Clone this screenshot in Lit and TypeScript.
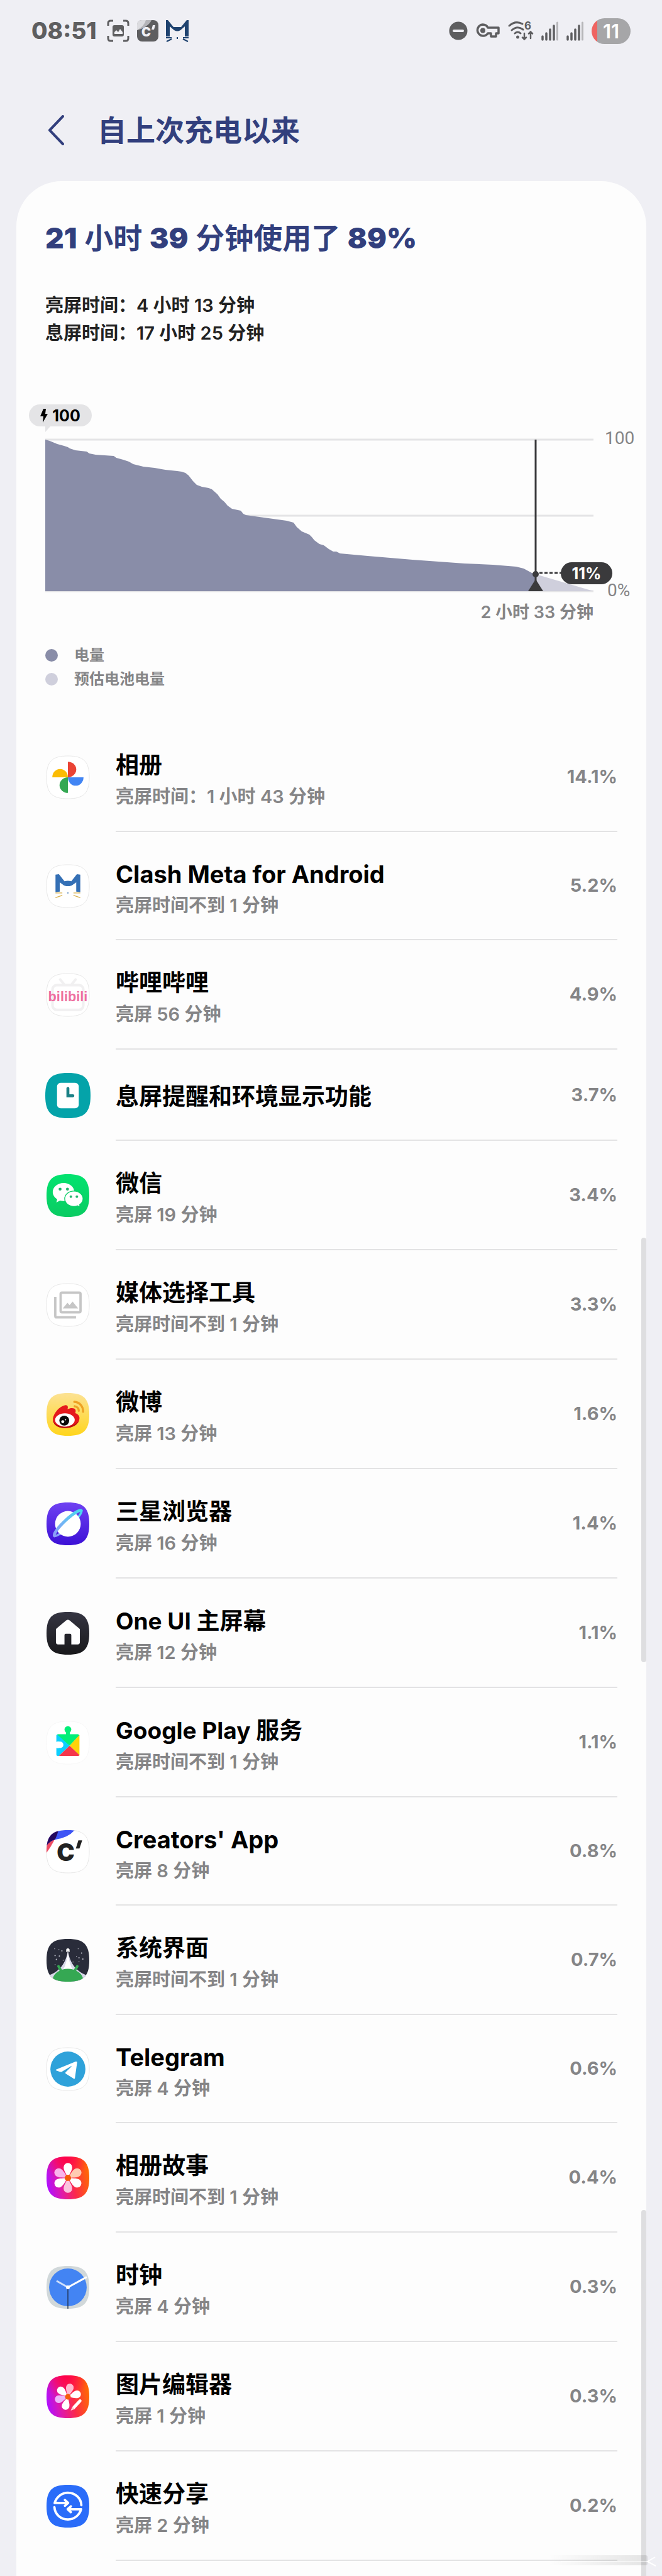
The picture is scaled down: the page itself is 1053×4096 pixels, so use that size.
import { LitElement, html, svg, css, nothing, TemplateResult } from "lit";
import { customElement, property } from "lit/decorators.js";
import { classMap } from "lit/directives/class-map.js";

interface AppUsage {
  name: string;
  detail?: string;
  share: string;
  icon: string;
  /** Latin-only names sit in a slightly shorter row. */
  latin?: boolean;
}

const APPS: AppUsage[] = [
  { name: "相册", detail: "亮屏时间：1 小时 43 分钟", share: "14.1%", icon: "photos" },
  { name: "Clash Meta for Android", detail: "亮屏时间不到 1 分钟", share: "5.2%", icon: "clash", latin: true },
  { name: "哔哩哔哩", detail: "亮屏 56 分钟", share: "4.9%", icon: "bilibili" },
  { name: "息屏提醒和环境显示功能", share: "3.7%", icon: "aod" },
  { name: "微信", detail: "亮屏 19 分钟", share: "3.4%", icon: "wechat" },
  { name: "媒体选择工具", detail: "亮屏时间不到 1 分钟", share: "3.3%", icon: "media" },
  { name: "微博", detail: "亮屏 13 分钟", share: "1.6%", icon: "weibo" },
  { name: "三星浏览器", detail: "亮屏 16 分钟", share: "1.4%", icon: "browser" },
  { name: "One UI 主屏幕", detail: "亮屏 12 分钟", share: "1.1%", icon: "home" },
  { name: "Google Play 服务", detail: "亮屏时间不到 1 分钟", share: "1.1%", icon: "play" },
  { name: "Creators' App", detail: "亮屏 8 分钟", share: "0.8%", icon: "creators", latin: true },
  { name: "系统界面", detail: "亮屏时间不到 1 分钟", share: "0.7%", icon: "system" },
  { name: "Telegram", detail: "亮屏 4 分钟", share: "0.6%", icon: "telegram", latin: true },
  { name: "相册故事", detail: "亮屏时间不到 1 分钟", share: "0.4%", icon: "stories" },
  { name: "时钟", detail: "亮屏 4 分钟", share: "0.3%", icon: "clock" },
  { name: "图片编辑器", detail: "亮屏 1 分钟", share: "0.3%", icon: "editor" },
  { name: "快速分享", detail: "亮屏 2 分钟", share: "0.2%", icon: "share" },
];

/** Battery level curve, in plot units (872 wide, 241 high, y downwards). */
const LEVELS = [
  [0, 0], [7, 2], [19, 7], [30, 10], [36, 12], [39, 14], [48, 17], [66, 19], [70, 22], [80, 24],
  [109, 26], [113, 29], [124, 32], [133, 35], [140, 39], [156, 43], [174, 45], [191, 48], [210, 50],
  [217, 51], [223, 53], [228, 57], [235, 66], [241, 72], [249, 75], [260, 77], [265, 79], [274, 87],
  [279, 94], [285, 99], [290, 105], [297, 110], [311, 113], [315, 118], [319, 120], [384, 129],
  [395, 132], [400, 139], [408, 146], [420, 151], [424, 155], [428, 160], [436, 166], [443, 168],
  [451, 174], [458, 178], [463, 178], [469, 181], [513, 185], [584, 191], [667, 197], [712, 199],
  [749, 202], [761, 205], [774, 212], [780, 214],
];

const SQUIRCLE = "M50 0C87 0 100 13 100 50S87 100 50 100 0 87 0 50 13 0 50 0Z";
const PETAL = "M50 50C46 40 40 33 40 25A10 10 0 0 1 60 25C60 33 54 40 50 50Z";

const plain = svg`<path d=${SQUIRCLE} fill="#fff" stroke="#e6e6e6" stroke-width="1.4"/>`;

const gradient = (from: string, to: string) => svg`
  <defs><linearGradient id="bg" x1="0" y1="0" x2="0" y2="1">
    <stop offset="0" stop-color=${from}/><stop offset="1" stop-color=${to}/>
  </linearGradient></defs>
  <path d=${SQUIRCLE} fill="url(#bg)"/>`;

const sunset = svg`
  <defs>
    <linearGradient id="sun" x1="0" y1="0.6" x2="1" y2="0.4">
      <stop offset="0" stop-color="#b010ff"/><stop offset="0.3" stop-color="#e01aa8"/>
      <stop offset="0.6" stop-color="#fb2a4c"/><stop offset="1" stop-color="#ff6a00"/>
    </linearGradient>
    <radialGradient id="glow" cx="0.45" cy="0" r="0.55">
      <stop offset="0" stop-color="#ff0048"/><stop offset="1" stop-color="#ff0048" stop-opacity="0"/>
    </radialGradient>
  </defs>
  <path d=${SQUIRCLE} fill="url(#sun)"/><path d=${SQUIRCLE} fill="url(#glow)"/>`;

const petals = (list: [number, string][]) =>
  list.map(([angle, fill]) => svg`<path d=${PETAL} fill=${fill} transform="rotate(${angle} 50 50)"/>`);

const ICONS: Record<string, TemplateResult> = {
  photos: svg`${plain}
    <path d="M50 50V13.5A19.5 18.2 0 0 1 50 50Z" fill="#ea4335"/>
    <path d="M50 50H13.5A18.2 19.5 0 0 1 50 50Z" fill="#fbbc04"/>
    <path d="M50 50H86.500A18.2 19.5 0 0 1 50 50Z" fill="#4285f4"/>
    <path d="M50 50V86.500A19.5 18.2 0 0 1 50 50Z" fill="#34a853"/>`,
  clash: svg`${plain}
    <path d="M21 23L29 22L42 38.500Q50 36.500 58 38.500L71 22L79 23V64L69.500 63V41L59 48.500L54 50H46L41 48.500L31 41V63L21 64Z" fill="#3570b5"/>
    <path d="M48 65H52L50 68Z" fill="#3570b5"/>
    <path d="M21 66H37M21 77L37 71.500M79 66H63M79 77L63 71.500" stroke="#d8b04c" stroke-width="1.8" fill="none"/>`,
  bilibili: svg`${plain}
    <path d="M32 14L41 25M68 14L59 25" stroke="#f1f0f1" stroke-width="6" stroke-linecap="round"/>
    <rect x="14" y="27" width="72" height="58" rx="10" fill="none" stroke="#f1f0f1" stroke-width="6"/>
    <text x="50" y="64" text-anchor="middle" font-family="'Liberation Sans Narrow','Liberation Sans',sans-serif" font-weight="700" font-size="32" fill="#ee6f9f">bilibili</text>`,
  aod: svg`<path d=${SQUIRCLE} fill="#04a3a9"/>
    <rect x="26" y="22" width="48" height="56" rx="8" fill="#fff"/>
    <path d="M50 34V50.500H61" fill="none" stroke="#1b8186" stroke-width="6.500" stroke-linecap="round"/>`,
  wechat: svg`${gradient("#02e36f", "#0acb62")}
    <path d="M40 20.500C54 20.500 65 30 65 41.500S54 63 40 63C37 63 34 62.600 31.500 61.800L23 66L25 58.500C18.500 54.500 14.500 48.500 14.500 41.500C14.500 30 26 20.500 40 20.500Z" fill="#fff"/>
    <path d="M64 39.500C76 39.500 85.500 47.500 85.500 57.500C85.500 63 82.500 68 77.500 71.500L78.500 77L72.500 74C70 75 67 75.500 64 75.500C52 75.500 42.500 67.500 42.500 57.500S52 39.500 64 39.500Z" fill="#fff" stroke="#08ce66" stroke-width="2"/>
    <g fill="#1fb66a"><circle cx="31.700" cy="35" r="3.500"/><circle cx="49" cy="35" r="3.500"/><circle cx="57" cy="52.500" r="3"/><circle cx="71" cy="52.500" r="3"/></g>`,
  media: svg`${plain}
    <rect x="33" y="21" width="46.500" height="46" rx="3" fill="none" stroke="#c6c6c6" stroke-width="5.500"/>
    <path d="M20.500 31V76Q20.500 79 23.500 79H69" fill="none" stroke="#c6c6c6" stroke-width="5.500"/>
    <path d="M38 58L49 45L54 50.500L61 42L74 58Z" fill="#c6c6c6"/>`,
  weibo: svg`${gradient("#fce294", "#ffd51c")}
    <path d="M15 62C15 49 30 30 44 28.500C50 28 51 33 49 38C58 33.500 67 35 68 40Q68.500 44 67 47C74 49 78 54 77 60C76 73 60 82 43 82C27 82 15 74 15 62Z" fill="#e5191c"/>
    <path d="M15 62C17 74 30 78 43 78C58 78 72 72 76 64C73 75 60 82 43 82C27 82 15 74 15 62Z" fill="#b90f14"/>
    <ellipse cx="43" cy="63" rx="23" ry="15.500" fill="#fff"/>
    <circle cx="41.500" cy="64.500" r="11.500" fill="#0a0a0a"/>
    <circle cx="38" cy="67" r="3.500" fill="#fff"/><circle cx="44.500" cy="62.500" r="1.500" fill="#fff"/>
    <g fill="none" stroke="#eea224" stroke-width="5" stroke-linecap="round"><path d="M65 20.500A21 22 0 0 1 85.500 44"/><path d="M66 31A10.500 10.500 0 0 1 75.500 41.500"/></g>`,
  browser: svg`${gradient("#6f42f2", "#3c10d6")}
    <defs><linearGradient id="ring" x1="0" y1="0" x2="1" y2="0"><stop offset="0" stop-color="#8d9df8"/><stop offset="1" stop-color="#48daee"/></linearGradient></defs>
    <g transform="rotate(-43 50 48.500)"><ellipse cx="50" cy="48.500" rx="43" ry="8" fill="none" stroke="url(#ring)" stroke-width="5"/></g>
    <circle cx="50" cy="50" r="30" fill="#fff"/>
    <g transform="rotate(-43 50 48.500)"><path d="M7 48.500A43 8.500 0 0 1 93 48.500" fill="none" stroke="url(#ring)" stroke-width="7" stroke-linecap="round"/></g>`,
  home: svg`${gradient("#353542", "#19191b")}
    <path d="M22 40L46 20Q50 17 54 20L78 40V71Q78 76 73 76H58V54Q58 51 55 51H45Q42 51 42 54V76H27Q22 76 22 71Z" fill="#fff"/>`,
  play: svg`<path d=${SQUIRCLE} fill="#fff" stroke="#f3f3f3"/>
    <path d="M26 30H45.500V26A8 8 0 1 1 54.500 26V30H74L77 33L54 57L23 33Z" fill="#00ef78"/>
    <path d="M25 31L54 57L29 81H26Q23 81 23 78V62A8 8 0 1 0 23 48V33Z" fill="#0bcfff"/>
    <path d="M77 32V80L54 57Z" fill="#ffd20a"/><path d="M29 81L54 57L77 79L75 81Z" fill="#f5364b"/>
    <path d="M21 51H29V60H21Z" fill="#fff"/><circle cx="32" cy="55" r="7.500" fill="#fff"/>`,
  creators: svg`${plain}
    <defs><clipPath id="sq"><path d=${SQUIRCLE}/></clipPath></defs>
    <g clip-path="url(#sq)">
      <path d="M0 0H27Q20 26 0 53Z" fill="#ee4b62"/>
      <path d="M0 0H66Q50 18 21 22Q8 25 0 36Z" fill="#3e55f5"/>
      <path d="M0 0H28Q25 12 20 22Q8 25 0 36Z" fill="#24085c"/>
    </g>
    <text x="24" y="72" font-family="Inter,sans-serif" font-weight="900" font-size="56" fill="#222">C</text>
    <path d="M74.500 24H83.500L77 43H68.500Z" fill="#222"/>`,
  system: svg`
    <defs><clipPath id="sq"><path d=${SQUIRCLE}/></clipPath></defs>
    <path d=${SQUIRCLE} fill="#292c3a"/>
    <g clip-path="url(#sq)">
      <path d="M50 28C45 58 30 78 0 87V100H100V87C70 78 55 58 50 28Z" fill="#d9d9ea"/>
      <path d="M50 28C47 58 42 74 24 90H76C58 74 53 58 50 28Z" fill="#fff"/>
      <path d="M46 31V26Q46 22 50 22Q54 22 54 26V31L50 29Z" fill="#f4f4f4"/>
      <path d="M28 64L35 76M72 64L65 76" stroke="#35a853" stroke-width="6" stroke-linecap="round"/>
      <ellipse cx="50" cy="97" rx="36" ry="27" fill="#35a853"/>
      <g fill="#c6c8d2"><circle cx="20" cy="39" r="1.500"/><circle cx="30" cy="40" r="1.500"/><circle cx="23" cy="48" r="1.500"/><circle cx="36" cy="28" r="1.500"/><circle cx="29" cy="25" r="1"/><circle cx="19" cy="23" r="1"/><circle cx="39" cy="50" r="1.200"/><circle cx="74" cy="23" r="1"/><circle cx="82" cy="33" r="1.500"/><circle cx="76" cy="44" r="1.500"/><circle cx="85" cy="47" r="1.500"/><circle cx="70" cy="41" r="1"/><circle cx="62" cy="54" r="1"/><circle cx="76" cy="53" r="1"/><circle cx="20" cy="60" r="1"/></g>
    </g>`,
  telegram: svg`${plain}
    <circle cx="50" cy="50" r="41" fill="#2fa2da"/>
    <path d="M22 53Q21 51.500 24 50.500L68 32.500Q72 31.500 71.500 35L66.500 70.500Q66 74 63 72L45 60.500Q43 59 45 57L58 44.500Q60 42 57 43.500L35 56.500Q32.500 57 30 56Z" fill="#fff"/>`,
  stories: svg`${sunset}
    ${petals([[60, "#ffcbb2"], [180, "#fbc3de"], [300, "#f9b4ec"], [0, "#fff"], [120, "#fff"], [240, "#fff"]])}
    <circle cx="50" cy="50" r="7.500" fill="#f65c0a"/>`,
  clock: svg`<path d=${SQUIRCLE} fill="#d1d8da"/>
    <circle cx="50" cy="50" r="44" fill="#4384f3"/>
    <path d="M50 50V100" stroke="#22324f" stroke-width="2"/>
    <path d="M50 50L23.500 35" stroke="#cfe0fc" stroke-width="4"/>
    <path d="M50 50L94 26" stroke="#fff" stroke-width="4.500"/>
    <circle cx="50" cy="50" r="4.500" fill="#fff"/>`,
  editor: svg`${sunset}
    <g transform="translate(5.500 5.500) scale(0.890)">${petals([[12, "#ffb9cf"], [-105, "#ecb6fb"], [-48, "#fff"], [75, "#fff"], [194, "#fff"]])}</g>
    <circle cx="50" cy="50" r="6.500" fill="#f65c0a"/>
    <path d="M78.500 59.500L64 75" stroke="#fff" stroke-width="7" stroke-linecap="round"/>
    <path d="M60.500 73L66.500 78.500L56.500 82.500Z" fill="#ffd0d4"/>`,
  share: svg`<path d=${SQUIRCLE} fill="#2a6cf9"/>
    <g fill="none" stroke="#fff" stroke-width="5.500" stroke-linecap="round" stroke-linejoin="round">
      <path d="M81.500 47.500C80.500 31 67 18.500 50 18.500C35.500 18.500 23 28.500 19 42.500H50M43 35.500L50.500 42.500L43 49"/>
      <path d="M18.500 52.500C19.500 69 33 81 50 81C64.500 81 77 71.500 81 57H50M57 50.500L49.500 57L57 64"/>
    </g>`,
};

@customElement("app-icon")
export class AppIcon extends LitElement {
  @property() name = "";
  static styles = css`
    :host { display: block; width: 68px; height: 68px; }
    :host([name="aod"]) { width: 72px; height: 72px; }
    svg { display: block; width: 100%; height: 100%; overflow: visible; }
  `;
  render() {
    return html`<svg viewBox="0 0 100 100" aria-hidden="true">${ICONS[this.name]}</svg>`;
  }
}

@customElement("status-bar")
export class StatusBar extends LitElement {
  static styles = css`
    :host { display: flex; align-items: center; height: 98px; padding: 0 50px; color: #5e5e60; }
    .time { font-size: 37px; font-weight: 800; line-height: 48px; margin-right: 16px; }
    .left, .right { display: flex; align-items: center; }
    .left { gap: 12px; }
    .right { gap: 13px; margin-left: auto; }
    svg { display: block; overflow: visible; }
    .battery {
      display: flex; align-items: center; justify-content: center;
      width: 62px; height: 41px; border-radius: 21px;
      background: linear-gradient(90deg, #ef6461 9px, #a6a6a8 9px);
      color: #fff; font-size: 31px; font-weight: 600;
    }
  `;

  private signal() {
    return html`<svg width="27" height="30" viewBox="0 0 27 30" aria-hidden="true">
      <path d="M2 29V24M8 29V19M14 29V13M20 29V7" stroke="#5e5e60" stroke-width="3.500" stroke-linecap="round"/>
      <path d="M25.500 29V2" stroke="#b6b6b9" stroke-width="3" stroke-linecap="round"/>
    </svg>`;
  }

  render() {
    return html`
      <span class="time">08:51</span>
      <div class="left">
        <svg width="36" height="36" viewBox="0 0 36 36" aria-hidden="true">
          <path d="M2 10V6Q2 2 6 2H10M26 2H30Q34 2 34 6V10M34 26V30Q34 34 30 34H26M10 34H6Q2 34 2 30V26" fill="none" stroke="#5e5e60" stroke-width="3"/>
          <rect x="9" y="9" width="18" height="18" rx="3" fill="#5e5e60"/>
          <path d="M12 23V20L15 17L18 20L21 15L25 20V23Z" fill="#efeff4"/>
        </svg>
        <svg width="34" height="34" viewBox="0 0 34 34" aria-hidden="true">
          <rect width="34" height="34" rx="8" fill="#5e5e60"/>
          <path d="M0 16V8Q0 0 8 0H23Q18 11 0 16Z" fill="#b4b4b8"/>
          <path d="M0 16V8Q0 0 8 0H14Q12 9 0 16Z" fill="#dcdce0"/>
          <text x="7" y="26" font-size="20" font-weight="900" fill="#efeff4">C</text>
          <path d="M25 8H29L27 15H23Z" fill="#efeff4"/>
        </svg>
        <svg width="36" height="36" viewBox="0 0 36 36" aria-hidden="true">
          <path d="M0 1H3L12 12H24L33 1H36V27H30V11L23 17Q18 20 13 17L6 11V27H0Z" fill="#1e426f"/>
          <path d="M0 29H9M27 29H36M1 35L9 31M35 35L27 31M18 28V31" stroke="#1e426f" stroke-width="2"/>
        </svg>
      </div>
      <div class="right">
        <svg width="30" height="30" viewBox="0 0 30 30" aria-hidden="true">
          <circle cx="15" cy="15" r="14.500" fill="#5e5e60"/><path d="M8 15H22" stroke="#efeff4" stroke-width="4" stroke-linecap="round"/>
        </svg>
        <svg width="38" height="24" viewBox="0 0 38 24" aria-hidden="true">
          <path d="M11 2A9 9 0 1 0 19 16H24V21H32V16H36V7H19A9 9 0 0 0 11 2Z" fill="none" stroke="#5e5e60" stroke-width="3.500" stroke-linejoin="round"/>
          <circle cx="11" cy="11.500" r="4" fill="#5e5e60"/>
        </svg>
        <svg width="40" height="32" viewBox="0 0 40 32" aria-hidden="true">
          <g fill="none" stroke="#5e5e60" stroke-width="3" stroke-linecap="round">
            <path d="M2 8Q12 -1 23 5M6 15Q15 7 24 14M11 20Q15.500 16 20 20"/>
            <path d="M26 20V29M23 26.500L26 29.500L29 26.500M36 28V18M33 20.500L36 17.500L39 20.500" stroke-width="2.500"/>
          </g>
          <circle cx="15.500" cy="26" r="2.500" fill="#5e5e60"/>
          <text x="26" y="14" font-size="17" font-weight="700" fill="#5e5e60">6</text>
        </svg>
        ${this.signal()} ${this.signal()}
        <span class="battery">11</span>
      </div>`;
  }
}

@customElement("battery-chart")
export class BatteryChart extends LitElement {
  static styles = css`
    :host { display: grid; grid-template-columns: 1fr 66px; column-gap: 18px; }
    .plot { position: relative; }
    .plot svg { display: block; width: 100%; height: auto; overflow: visible; }
    .axis {
      display: flex; flex-direction: column; justify-content: space-between;
      margin: -20px 0 -16px; color: #858587;
      font-family: Roboto, sans-serif; font-size: 28px; font-weight: 400; line-height: 36px;
    }
    .axis span:last-child { padding-left: 4px; }
    .start, .now {
      position: absolute; display: flex; align-items: center; justify-content: center;
      height: 35px; border-radius: 18px; font-size: 25px; font-weight: 700;
    }
    .start { left: -26px; top: -56px; width: 100px; gap: 7px; background: #e4e4e6; color: #000; }
    .start::after {
      content: ""; position: absolute; left: 26px; top: 100%;
      border-style: solid; border-width: 9px 8px 0 0; border-color: #e4e4e6 transparent transparent;
    }
    .start svg { width: 12px; height: 22px; }
    .now { right: -30px; bottom: 12px; width: 82px; background: #3a3a3c; color: #fff; }
    .left { margin-top: 15px; text-align: right; color: #858587; font-size: 27px; font-weight: 600; line-height: 36px; }
  `;

  render() {
    const curve = LEVELS.map(([x, y]) => `${x},${y}`).join(" ");
    return html`
      <div class="plot">
        <svg viewBox="0 0 872 242" role="img" aria-label="电量">
          <path d="M0 0H872M0 121H872M0 241H872" stroke="#e4e4e6" stroke-width="3"/>
          <polygon points="0,241 ${curve} 780,241" fill="#898da8"/>
          <polygon points="780,214 872,241 780,241" fill="#cfcfdc"/>
          <path d="M780 0V241" stroke="#3a3a3c" stroke-width="3"/>
          <circle cx="780" cy="214" r="5" fill="#3a3a3c"/>
          <path d="M780 222L792 241H768Z" fill="#3a3a3c"/>
          <path d="M786 212H822" stroke="#3a3a3c" stroke-width="3" stroke-dasharray="5 3"/>
        </svg>
        <div class="start">
          <svg viewBox="0 0 12 22" aria-hidden="true"><path d="M5 0H9L8 8H12L4 22L5 12H0Z" fill="#000"/></svg>
          <span>100</span>
        </div>
        <div class="now">11%</div>
      </div>
      <div class="axis"><span>100</span><span>0%</span></div>
      <div class="left">2 小时 33 分钟</div>`;
  }
}

@customElement("app-root")
export class AppRoot extends LitElement {
  static styles = css`
    :host {
      display: block; background: #efeff4; color: #000; overflow: hidden;
      font-family: Inter, "Noto Sans CJK SC", sans-serif;
    }
    h1, h2, p, ul { margin: 0; padding: 0; }
    .bar { display: flex; align-items: center; gap: 34px; padding: 77px 57px 49px; color: #323f7d; }
    .back {
      display: flex; align-items: center; justify-content: center;
      width: 64px; height: 64px; padding: 0; border: 0; background: none; color: inherit;
    }
    h1 { font-size: 46px; font-weight: 600; line-height: 64px; }
    .card {
      position: relative; margin: 0 25px 0 26px; padding: 60px 0 26px;
      border-radius: 72px 72px 0 0; background: #fdfdfd;
    }
    .summary { padding: 0 46px; }
    h2 { color: #323f7d; font-size: 46px; font-weight: 600; line-height: 60px; }
    h2 b { font-weight: 900; }
    .times { margin-top: 56px; color: #222; font-size: 29px; font-weight: 600; line-height: 44px; }
    battery-chart { margin: 147px 0 0 46px; }
    .legend { margin: 31px 46px 0; color: #858587; font-size: 24px; font-weight: 600; line-height: 38px; list-style: none; }
    .legend li { display: flex; align-items: center; gap: 26px; }
    .dot { width: 20px; height: 20px; border-radius: 50%; background: #898da8; }
    .dot.estimate { background: #cfcfdc; }
    .apps { margin: 50px 46px 0; list-style: none; }
    .row { display: flex; gap: 40px; height: 174px; }
    .row.latin { height: 172px; }
    .row.single { height: 145px; }
    .slot { display: flex; align-items: center; justify-content: center; flex: none; width: 72px; }
    .body { display: flex; align-items: center; flex: 1; box-sizing: border-box; border-bottom: 2px solid #e3e3e4; }
    .text { flex: 1; padding-top: 6px; }
    .name { font-size: 37px; font-weight: 700; line-height: 58px; }
    .latin .name { font-size: 38px; }
    .detail { color: #858587; font-size: 29px; font-weight: 600; line-height: 42px; }
    .share { color: #858587; font-size: 29px; font-weight: 700; line-height: 42px; }
    .thumb { position: absolute; right: 0; width: 8px; border-radius: 4px; background: #dedee0; }
    .thumb.upper { top: 1680px; height: 675px; }
    .thumb.lower { top: 3226px; bottom: 0; border-radius: 4px 4px 0 0; }
    .mark { position: absolute; right: -18px; bottom: 11px; width: 174px; height: 28px; }
  `;

  private row(app: AppUsage) {
    return html`<li class=${classMap({ row: true, latin: !!app.latin, single: !app.detail })}>
      <div class="slot"><app-icon name=${app.icon}></app-icon></div>
      <div class="body">
        <div class="text">
          <p class="name">${app.name}</p>
          ${app.detail ? html`<p class="detail">${app.detail}</p>` : nothing}
        </div>
        <span class="share">${app.share}</span>
      </div>
    </li>`;
  }

  render() {
    return html`
      <div lang="zh-CN">
        <status-bar></status-bar>
        <header class="bar">
          <button class="back" aria-label="返回">
            <svg width="26" height="48" viewBox="0 0 26 48" aria-hidden="true">
              <path d="M24 2L3 24L24 46" fill="none" stroke="currentColor" stroke-width="4" stroke-linecap="round" stroke-linejoin="round"/>
            </svg>
          </button>
          <h1>自上次充电以来</h1>
        </header>
        <main class="card">
          <section class="summary">
            <h2><b>21</b> 小时 <b>39</b> 分钟使用了 <b>89%</b></h2>
            <div class="times">
              <p>亮屏时间：4 小时 13 分钟</p>
              <p>息屏时间：17 小时 25 分钟</p>
            </div>
          </section>
          <battery-chart></battery-chart>
          <ul class="legend">
            <li><span class="dot"></span>电量</li>
            <li><span class="dot estimate"></span>预估电池电量</li>
          </ul>
          <ul class="apps">${APPS.map((app) => this.row(app))}</ul>
          <div class="thumb upper"></div>
          <div class="thumb lower"></div>
          <svg class="mark" viewBox="0 0 174 28" aria-hidden="true">
            <defs><linearGradient id="fade"><stop offset="0" stop-color="#000" stop-opacity="0"/><stop offset="1" stop-color="#000" stop-opacity="0.1"/></linearGradient></defs>
            <rect x="0" y="4" width="158" height="16" rx="3" fill="url(#fade)"/>
            <path d="M20 14H157" stroke="#fff" stroke-width="2" stroke-opacity="0.5"/>
            <path d="M170 7L158 14L171 21" fill="none" stroke="#fff" stroke-width="2"/>
          </svg>
        </main>
      </div>`;
  }
}
